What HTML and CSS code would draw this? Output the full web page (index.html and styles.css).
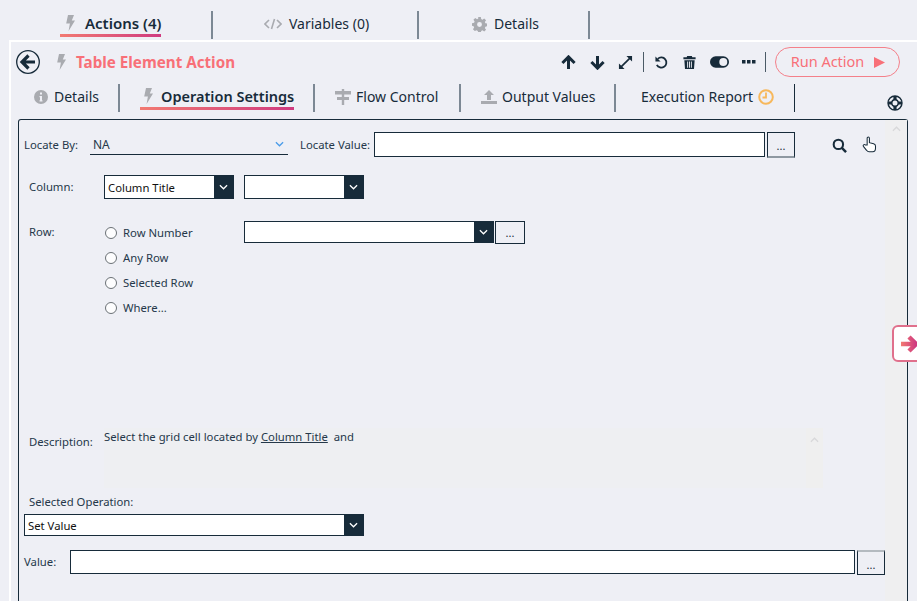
FILE: index.html
```html
<!DOCTYPE html>
<html>
    <head>
        <link rel="stylesheet" href="styles.css">
    </head>
    <body>
        <svg class="defs">
            <defs>
                <linearGradient id="pink" x1="0" y1="0" x2="1" y2="0">
                    <stop offset="0" stop-color="#f27a72"/>
                    <stop offset="1" stop-color="#cf3a80"/>
                </linearGradient>
                <symbol id="bolt" viewBox="0 0 10 16">
                    <path d="M3 0h6L6.800 5.600H10L3.600 16l1.300-7.600H1.200z"/>
                </symbol>
                <symbol id="chev" viewBox="0 0 10 6">
                    <path d="M1 1l4 4 4-4" fill="none" stroke="currentColor" stroke-width="1.400"/>
                </symbol>
                <symbol id="chev-up" viewBox="0 0 10 6">
                    <path d="M1 5l4-4 4 4" fill="none" stroke="currentColor" stroke-width="1.400"/>
                </symbol>
            </defs>
        </svg>

        <ul class="main-tabs">
            <li class="main-tab tab-actions">
                <span class="tab-label active">
                    <svg class="ico bolt-ico"><use href="#bolt"/></svg>
                    <b>Actions (4)</b>
                </span>
            </li>
            <li class="main-tab tab-variables">
                <span class="tab-label">
                    <svg class="ico code-ico" viewBox="0 0 18 12"><path d="M5 2L1 6l4 4M13 2l4 4-4 4M10.500 1L7.500 11" fill="none" stroke="#a9abb0" stroke-width="1.600"/></svg>
                    Variables (0)
                </span>
            </li>
            <li class="main-tab tab-details">
                <span class="tab-label">
                    <svg class="ico gear-ico" viewBox="0 0 16 16"><path fill="#a9abb0" fill-rule="evenodd" d="M6.600 0h2.800l.4 2.200 1.300.6L13 1.500l2 2-1.300 1.900.6 1.300 2.200.4v2.800l-2.200.4-.6 1.300 1.300 1.900-2 2-1.900-1.300-1.300.6-.4 2.200H6.600l-.4-2.200-1.300-.6L3 15l-2-2 1.300-1.900-.6-1.300L0 9.400V6.600l2.200-.4.6-1.300L1.500 3l2-2 1.900 1.300 1.300-.6zM8 5.400a2.600 2.600 0 1 0 0 5.200 2.600 2.600 0 0 0 0-5.200z"/></svg>
                    Details
                </span>
            </li>
        </ul>

        <div class="panel">
            <div class="action-head">
                <svg class="back-ico" viewBox="0 0 24 24">
                    <circle cx="12" cy="12" r="11.300" fill="none" stroke="#172b3a" stroke-width="1.300"/>
                    <path d="M12.500 5.500L6 12l6.500 6.500M6.500 12H19" fill="none" stroke="#172b3a" stroke-width="3.200"/>
                </svg>
                <svg class="ico title-bolt"><use href="#bolt"/></svg>
                <span class="action-title">Table Element Action</span>
                <div class="head-tools">
                    <svg class="tool t-up" viewBox="0 0 16 16"><path d="M8 15V3M1.500 8.500L8 2l6.500 6.500" fill="none" stroke="#172b3a" stroke-width="3.200"/></svg>
                    <svg class="tool t-down" viewBox="0 0 16 16"><path d="M8 1v12M1.500 7.500L8 14l6.500-6.500" fill="none" stroke="#172b3a" stroke-width="3.200"/></svg>
                    <svg class="tool t-expand" viewBox="0 0 16 16"><path d="M3 13L13 3" stroke="#172b3a" stroke-width="1.800"/><path fill="#172b3a" d="M9 1h6v6zM1 9v6h6z"/></svg>
                    <span class="tool-sep"></span>
                    <svg class="tool t-undo" viewBox="0 0 16 16"><path d="M4 4.200A5.400 5.400 0 1 1 3 10.500" fill="none" stroke="#172b3a" stroke-width="1.900"/><path fill="#172b3a" d="M1.500 1.500v5.500H7z"/></svg>
                    <svg class="tool t-trash" viewBox="0 0 16 16"><path fill="#172b3a" fill-rule="evenodd" d="M5.500 1h5l.5 1.500h3.500v2h-13v-2H5zM2.500 5.500h11L12.800 15H3.200zM5.500 7v6.500h1V7zM7.500 7v6.500h1V7zM9.500 7v6.500h1V7z"/></svg>
                    <svg class="t-toggle" viewBox="0 0 20 12"><rect width="20" height="12" rx="6" fill="#172b3a"/><circle cx="14" cy="6" r="4.200" fill="#eeeff5"/></svg>
                    <svg class="t-dots" viewBox="0 0 14 4"><path fill="#172b3a" d="M0 0h3.500v3.500H0zM5 0h3.500v3.500H5zM10 0h3.500v3.500H10z"/></svg>
                    <span class="tool-sep sep-run"></span>
                    <button class="run-btn">Run Action <svg class="run-play" viewBox="0 0 11 11"><path fill="#f87078" d="M0 0l11 5.500L0 11z"/></svg></button>
                </div>
            </div>

            <ul class="sub-tabs">
                <li class="sub-tab st-details">
                    <svg class="ico info-ico" viewBox="0 0 14 14"><path fill="#a9abb0" fill-rule="evenodd" d="M7 0a7 7 0 1 1 0 14A7 7 0 0 1 7 0zM6 2.500v2h2v-2zM5.500 6v1.200H6v3H5.500v1.300h3v-1.300H8V6z"/></svg>
                    Details
                </li>
                <li class="sub-tab st-operation">
                    <span class="tab-label active">
                        <svg class="ico bolt-ico"><use href="#bolt"/></svg>
                        <b>Operation Settings</b>
                    </span>
                </li>
                <li class="sub-tab st-flow">
                    <svg class="ico flow-ico" viewBox="0 0 16 16"><path fill="#a9abb0" d="M6.800 0h2.400v2H16v3.500H9.200V8H14v3H9.200v5H6.800v-5H2V8h4.800V5.500H0V2h6.800z"/></svg>
                    Flow Control
                </li>
                <li class="sub-tab st-output">
                    <svg class="ico out-ico" viewBox="0 0 16 14"><path fill="#a9abb0" d="M8 0l5 5H10v5H6V5H3zM0 11h16v3H0z"/></svg>
                    Output Values
                </li>
                <li class="sub-tab st-report">
                    Execution Report
                    <svg class="ico clock-ico" viewBox="0 0 16 16"><circle cx="8" cy="8" r="6.800" fill="none" stroke="#f7b85c" stroke-width="2"/><path d="M8 3.500V8.500H4.500" fill="none" stroke="#f7b85c" stroke-width="1.800"/></svg>
                </li>
                <li class="help">
                    <svg class="help-ico" viewBox="0 0 16 16">
                        <circle cx="8" cy="8" r="7" fill="none" stroke="#172b3a" stroke-width="1.400"/>
                        <circle cx="8" cy="8" r="3.200" fill="none" stroke="#172b3a" stroke-width="1.400"/>
                        <path d="M8 1v4M8 11v4M1 8h4M11 8h4" stroke="#172b3a" stroke-width="3.200"/>
                    </svg>
                </li>
            </ul>

            <div class="frame">
                <div class="form">
                    <div class="row locate-row">
                        <label class="lbl lbl-by">Locate By:</label>
                        <div class="combo">
                            <span>NA</span>
                            <svg class="combo-chev"><use href="#chev"/></svg>
                        </div>
                        <label class="lbl lbl-value">Locate Value:</label>
                        <div class="input locate-input"></div>
                        <div class="dots-btn dots-top">...</div>
                        <svg class="search-ico" viewBox="0 0 16 16"><circle cx="6.800" cy="6.800" r="5" fill="none" stroke="#172b3a" stroke-width="2.200"/><path d="M10.500 10.500L15 15" stroke="#172b3a" stroke-width="2.600"/></svg>
                        <svg class="hand-ico" viewBox="0 0 16 18"><path d="M5.500 9.500V2.300a1.200 1.200 0 0 1 2.400 0V7l4.500 1.200c1.300.4 2 1.200 2 2.400V13c0 2-1.300 3.800-3 3.800H7.500c-1.200 0-1.900-.6-2.600-1.600L1.500 11c-.9-1.300.8-2.700 2-1.500z" fill="#fff" stroke="#172b3a" stroke-width="1.100"/></svg>
                    </div>

                    <div class="row column-row">
                        <label class="lbl lbl-col">Column:</label>
                        <div class="select sel-col"><span>Column Title</span><i class="arrow"><svg class="arrow-chev"><use href="#chev"/></svg></i></div>
                        <div class="select sel-col2"><span></span><i class="arrow"><svg class="arrow-chev"><use href="#chev"/></svg></i></div>
                    </div>

                    <div class="row row-row">
                        <label class="lbl lbl-col lbl-row">Row:</label>
                        <ul class="radios">
                            <li class="radio"><i></i>Row Number</li>
                            <li class="radio"><i></i>Any Row</li>
                            <li class="radio"><i></i>Selected Row</li>
                            <li class="radio"><i></i>Where...</li>
                        </ul>
                        <div class="select sel-row"><span></span><i class="arrow"><svg class="arrow-chev"><use href="#chev"/></svg></i></div>
                        <div class="dots-btn dots-row">...</div>
                    </div>

                    <div class="row desc-row">
                        <label class="lbl lbl-col lbl-desc">Description:</label>
                        <div class="desc-box">
                            <p>Select the grid cell located by <u>Column Title</u>&nbsp; and</p>
                            <div class="desc-scroll"><svg class="scroll-chev"><use href="#chev-up"/></svg></div>
                        </div>
                    </div>

                    <label class="lbl op-lbl">Selected Operation:</label>
                    <div class="select sel-op"><span>Set Value</span><i class="arrow"><svg class="arrow-chev"><use href="#chev"/></svg></i></div>

                    <div class="row value-row">
                        <label class="lbl lbl-val">Value:</label>
                        <div class="input value-input"></div>
                        <div class="dots-btn dots-val">...</div>
                    </div>
                </div>
                <div class="frame-scroll"><svg class="scroll-chev"><use href="#chev-up"/></svg></div>
            </div>
        </div>

        <div class="side-tab">
            <svg viewBox="0 0 20 20" class="side-arrow"><path d="M2 10h15M10 3l7 7-7 7" fill="none" stroke="url(#pink)" stroke-width="4.500"/></svg>
        </div>
    </body>
</html>
```

FILE: styles.css
```css
* {
    box-sizing: border-box;
    font-family: 'Noto Sans', 'Open Sans', sans-serif;
}

html, body {
    height: 100%;
}

body {
    margin: 0;
    background: #eeeff5;
    color: #172b3a;
    overflow: hidden;
    position: relative;
}

ul {
    margin: 0;
    padding: 0;
    list-style: none;
}

.defs {
    display: block;
    width: 0;
    height: 0;
}

.ico {
    fill: #a9abb0;
    flex: none;
}

.bolt-ico {
    width: 10px;
    height: 16px;
    margin-right: 10px;
}

b {
    font-weight: 600;
}

/* top tabs */
.main-tabs {
    display: flex;
    height: 40px;
    padding-top: 11px;
}

.main-tab {
    height: 28px;
    border-right: 2px solid #7c8894;
    font-size: 14px;
    line-height: 26px;
}

.tab-actions {
    width: 213px;
    padding-left: 60px;
}

.tab-variables {
    width: 206px;
    padding-left: 51px;
}

.tab-details {
    width: 171px;
    padding-left: 53px;
}

.tab-label {
    display: inline-flex;
    align-items: center;
    height: 25px;
    padding-top: 1px;
    white-space: nowrap;
}

.tab-label.active {
    border-bottom: 3px solid;
    border-image: linear-gradient(90deg, #f27a72, #cf3a80) 1;
    padding-left: 5px;
    height: 26px;
}

.tab-label.active b {
    font-size: 15px;
}

.st-operation .tab-label.active {
    padding-left: 3px;
}

.st-operation .bolt-ico {
    margin-right: 8px;
}

.st-operation .tab-label.active b {
    font-size: 14.500px;
}

.code-ico {
    width: 18px;
    height: 12px;
    margin-right: 7px;
}

.gear-ico {
    width: 15px;
    height: 15px;
    margin-right: 7px;
}

/* panel */
.panel {
    margin-left: 9px;
    height: 561px;
    overflow: hidden;
    border-top: 2px solid #fff;
    border-left: 2px solid #fff;
}

.action-head {
    display: flex;
    align-items: center;
    height: 40px;
    padding-left: 5px;
}

.back-ico {
    width: 24px;
    height: 24px;
}

.title-bolt {
    width: 10px;
    height: 16px;
    margin-left: 16px;
    margin-right: 10px;
}

.action-title {
    font-size: 15.200px;
    font-weight: 700;
    color: #f87078;
}

.head-tools {
    display: flex;
    align-items: center;
    margin-left: auto;
    margin-right: 17px;
}

.tool {
    width: 15px;
    height: 15px;
}

.t-up {
    margin-right: 14px;
}

.t-down {
    margin-right: 13px;
}

.t-expand {
    margin-right: 10px;
}

.tool-sep {
    width: 1px;
    height: 20px;
    background: #4b5a66;
    margin-right: 10px;
}

.t-undo {
    margin-right: 13px;
}

.t-trash {
    margin-right: 13px;
}

.t-toggle {
    width: 19px;
    height: 12px;
    margin-right: 13px;
}

.t-dots {
    width: 14px;
    height: 4px;
    margin-right: 9px;
}

.sep-run {
    margin-right: 9px;
}

.run-btn {
    display: flex;
    align-items: center;
    justify-content: center;
    gap: 10px;
    width: 125px;
    height: 30px;
    border: 1px solid #f4808a;
    border-radius: 15px;
    background: transparent;
    color: #f87078;
    font-size: 14.500px;
    padding: 0 0 3px 1px;
}

.run-play {
    width: 11px;
    height: 11px;
    margin-top: 3px;
}

/* sub tabs */
.sub-tabs {
    display: flex;
    height: 37px;
    padding-top: 2px;
    font-size: 14px;
}

.sub-tab {
    display: flex;
    align-items: flex-start;
    height: 28px;
    line-height: 26px;
    border-right: 2px solid #7c8894;
    white-space: nowrap;
}

.st-details {
    width: 109px;
    padding-left: 23px;
}

.info-ico {
    width: 14px;
    height: 14px;
    margin: 6px 6px 0 0;
}

.st-operation {
    width: 195px;
    padding-left: 20px;
}

.st-flow {
    width: 146px;
    padding-left: 20px;
}

.flow-ico {
    width: 16px;
    height: 16px;
    margin: 5px 5px 0 0;
}

.st-output {
    width: 155px;
    padding-left: 20px;
}

.out-ico {
    width: 16px;
    height: 14px;
    margin: 6px 5px 0 0;
}

.st-report {
    width: 179px;
    padding-left: 25px;
    border-right: 1px solid #172b3a;
}

.clock-ico {
    width: 16px;
    height: 16px;
    margin: 5px 0 0 5px;
}

.help {
    margin-left: 92px;
    padding-top: 11px;
}

.help-ico {
    display: block;
    width: 16px;
    height: 16px;
}

/* form frame */
.frame {
    display: flex;
    width: 890px;
    height: 482px;
    margin-left: 7px;
    border: 1px solid #172b3a;
    border-bottom: 0;
    border-radius: 3px 3px 0 0;
}

.form {
    flex: 1;
    padding: 12px 0 0 5px;
}

.frame-scroll {
    width: 22px;
    background: #efeff0;
}

.scroll-chev {
    display: block;
    width: 9px;
    height: 6px;
    margin: 6px auto 0;
    color: #d8d8da;
}

.row {
    display: flex;
    align-items: flex-start;
}

.lbl {
    font-size: 11.300px;
    color: #25384a;
    white-space: nowrap;
}

.locate-row {
    height: 43px;
}

.lbl-by {
    width: 66px;
    line-height: 25px;
}

.combo {
    display: flex;
    align-items: center;
    justify-content: space-between;
    width: 198px;
    height: 23px;
    margin-right: 12px;
    padding: 2px 4px 0 3px;
    border-bottom: 1px solid #172b3a;
    font-size: 12px;
    color: #25384a;
}

.combo-chev {
    width: 9px;
    height: 6px;
    color: #4a9be8;
}

.lbl-value {
    width: 74px;
    line-height: 25px;
}

.input {
    height: 25px;
    background: #fff;
    border: 1px solid #172b3a;
}

.locate-input {
    width: 391px;
}

.dots-btn {
    width: 28px;
    height: 26px;
    margin-left: 2px;
    border: 1px solid #172b3a;
    border-bottom: 2px solid #8e98a1;
    background: #eeeff5;
    font-size: 11px;
    line-height: 25px;
    text-align: center;
}

.search-ico {
    width: 15px;
    height: 15px;
    margin: 6px 0 0 37px;
}

.hand-ico {
    width: 15px;
    height: 17px;
    margin: 4px 0 0 15px;
}

.column-row {
    height: 46px;
}

.lbl-col {
    width: 80px;
    padding-left: 5px;
    line-height: 24px;
}

.select {
    display: flex;
    justify-content: space-between;
    height: 24px;
    background: #fff;
    border: 1px solid #172b3a;
    font-size: 11.300px;
    line-height: 23px;
    color: #111;
}

.select span {
    padding-left: 3px;
}

.arrow {
    display: flex;
    align-items: center;
    justify-content: center;
    width: 19px;
    background: #172b3a;
}

.arrow-chev {
    width: 9px;
    height: 6px;
    color: #fff;
}

.sel-col {
    width: 130px;
    margin-right: 10px;
}

.sel-col2 {
    width: 120px;
}

.row-row {
    height: 207px;
}

.lbl-row {
    line-height: 21px;
}

.radios {
    width: 140px;
}

.radio {
    display: flex;
    align-items: center;
    height: 25px;
    font-size: 11.300px;
    color: #25384a;
    margin-top: -1px;
    margin-bottom: 1px;
}

.radio i {
    width: 12px;
    height: 12px;
    margin: 0 6px 0 1px;
    border: 1px solid #6b7176;
    border-radius: 50%;
    background: #fdfdfe;
}

.sel-row {
    width: 250px;
    height: 22px;
}

.dots-row {
    width: 30px;
    height: 23px;
    margin-left: 1px;
    line-height: 22px;
    border-bottom: 1px solid #172b3a;
}

.desc-row {
    height: 65px;
}

.lbl-desc {
    line-height: 28px;
}

.desc-box {
    display: flex;
    justify-content: space-between;
    width: 719px;
    height: 60px;
    background: #eeeff2;
}

.desc-box p {
    margin: 0;
    padding-top: 2px;
    font-size: 11.300px;
    line-height: 14px;
    color: #25384a;
}

.desc-scroll {
    width: 17px;
    padding-top: 3px;
    background: #efefef;
}

.op-lbl {
    display: block;
    padding-left: 5px;
    line-height: 18px;
}

.sel-op {
    width: 340px;
    height: 22px;
    line-height: 21px;
    margin-top: 3px;
}

.value-row {
    margin-top: 14px;
}

.lbl-val {
    width: 46px;
    line-height: 24px;
}

.value-input {
    width: 785px;
    height: 24px;
}

.dots-val {
    height: 25px;
    border-top: 2px solid #b4bac0;
    border-bottom: 1px solid #172b3a;
}

/* slide out handle on the right edge */
.side-tab {
    position: absolute;
    left: 892px;
    top: 325px;
    width: 40px;
    height: 37px;
    background: #fff;
    border: 2px solid #e0708c;
    border-radius: 6px;
}

.side-arrow {
    display: block;
    width: 20px;
    height: 20px;
    margin: 7px 0 0 5px;
}
```
